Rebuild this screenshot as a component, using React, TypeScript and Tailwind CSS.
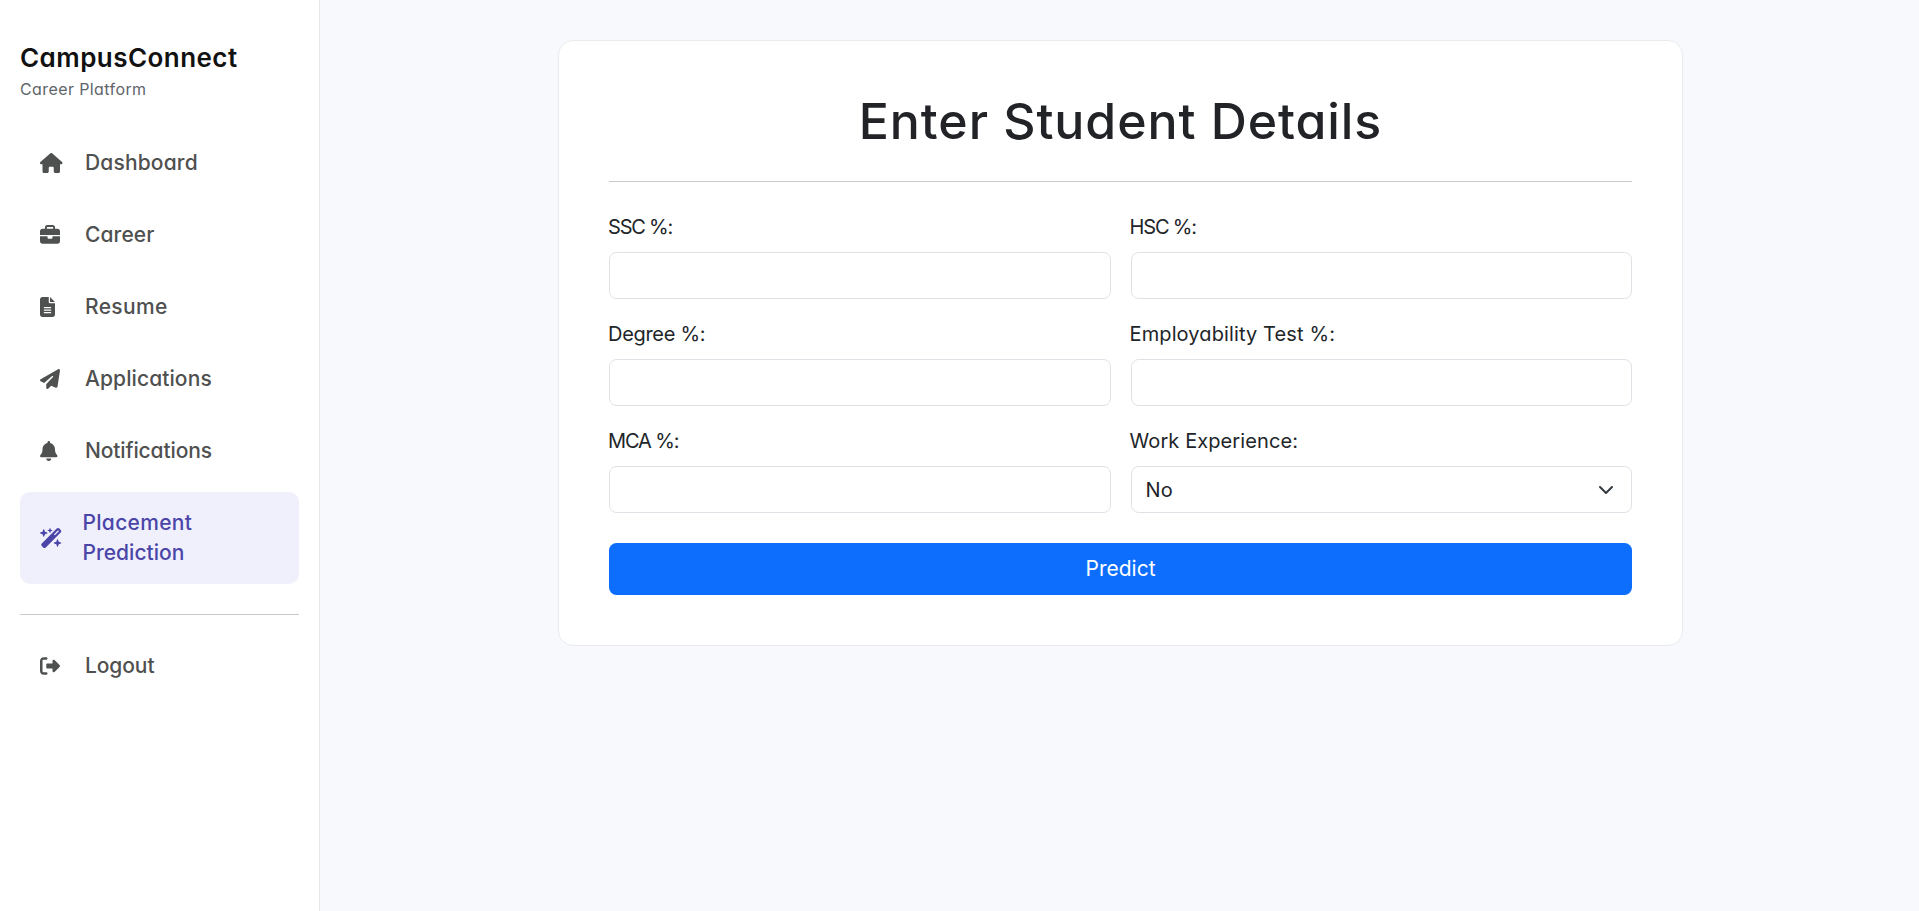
import type { ReactNode } from 'react'
import type { IconType } from 'react-icons'
import {
  FaHouse,
  FaBriefcase,
  FaFileLines,
  FaPaperPlane,
  FaBell,
  FaWandMagicSparkles,
  FaRightFromBracket,
} from 'react-icons/fa6'

type NavItem = { label: string; icon: IconType; iconWidth: string; tracking: string }

const navItems: NavItem[] = [
  { label: 'Dashboard', icon: FaHouse, iconWidth: 'w-[22.5px]', tracking: 'tracking-[0.15px]' },
  { label: 'Career', icon: FaBriefcase, iconWidth: 'w-5', tracking: 'tracking-[0.1px]' },
  { label: 'Resume', icon: FaFileLines, iconWidth: 'w-[15px]', tracking: 'tracking-[0.35px]' },
  { label: 'Applications', icon: FaPaperPlane, iconWidth: 'w-5', tracking: 'tracking-[0.1px]' },
  { label: 'Notifications', icon: FaBell, iconWidth: 'w-[17.5px]', tracking: 'tracking-[-0.12px]' },
]

const logoutItem: NavItem = {
  label: 'Logout',
  icon: FaRightFromBracket,
  iconWidth: 'w-5',
  tracking: 'tracking-[-0.1px]',
}

function NavLink({ label, icon: Icon, iconWidth, tracking }: NavItem) {
  return (
    <a href="#" className="flex items-center rounded-[10px] px-5 py-4 text-[21px] leading-[30px] font-medium text-[#4f5050]">
      <span className="mr-5 flex w-[25px] shrink-0">
        <Icon className={`h-5 ${iconWidth}`} preserveAspectRatio="none" />
      </span>
      <span className={tracking}>{label}</span>
    </a>
  )
}

function Field({ label, tracking, children }: { label: string; tracking: string; children?: ReactNode }) {
  return (
    <div>
      <label className={`mb-2.5 -ml-px block text-xl leading-[30px] whitespace-nowrap ${tracking}`}>{label}</label>
      {children ?? (
        <input type="text" className="block h-[47px] w-full rounded-[7.5px] border border-[#dee2e6] bg-white px-[15px]" />
      )}
    </div>
  )
}

export default function App() {
  return (
    <div className="flex h-[911px] overflow-hidden bg-[#f8f9fd] font-['Inter',sans-serif] text-[#212529] [font-feature-settings:'cv11','calt'_0]">
      <aside className="w-80 shrink-0 border-r border-[#e5e7eb] bg-white px-5 pt-[42px]">
        <h4 className="text-[26px] leading-[31px] font-semibold tracking-[0.45px] text-[#111111]">CampusConnect</h4>
        <p className="mt-1 text-base leading-6 tracking-[0.4px] text-[#60656a]">Career Platform</p>

        <nav className="mt-[31px] flex flex-col gap-2.5">
          {navItems.map((item) => (
            <NavLink key={item.label} {...item} />
          ))}
          <a href="#" className="flex items-center rounded-[10px] bg-[#f0f0fd] px-5 py-4 text-[21px] leading-[30px] font-medium text-[#4b45a8]">
            <span className="mr-5 flex w-[22.5px] shrink-0">
              <FaWandMagicSparkles className="h-5 w-[22.5px]" preserveAspectRatio="none" />
            </span>
            <span className="flex flex-col">
              <span className="tracking-[0.3px]">Placement</span>
              <span className="tracking-[0.02px]">Prediction</span>
            </span>
          </a>
        </nav>

        <hr className="mt-[30px] mb-5 border-t border-[#c8c9ca]" />
        <NavLink {...logoutItem} />
      </aside>

      <main className="flex-1 pt-10 pl-[238px]">
        <form className="w-[1125px] rounded-[15px] border border-[#e9ebee] bg-white p-[50px]">
          <h1 className="text-center text-[50px] leading-[60px] font-medium tracking-[0.93px] whitespace-nowrap text-[#212326]">
            Enter Student Details
          </h1>
          <hr className="my-[30px] border-t border-[#c8c9ca]" />
          <div className="grid grid-cols-2 gap-5">
            <Field label="SSC %:" tracking="tracking-[-1.2px]" />
            <Field label="HSC %:" tracking="tracking-[-1.15px]" />
            <Field label="Degree %:" tracking="tracking-[-0.3px]" />
            <Field label="Employability Test %:" tracking="tracking-[0.12px]" />
            <Field label="MCA %:" tracking="tracking-[-1.1px]" />
            <Field label="Work Experience:" tracking="tracking-[0.1px]">
              <button
                type="button"
                className="flex h-[47px] w-full items-center justify-between rounded-[7.5px] border border-[#dee2e6] bg-white pr-[17px] pl-[14px] text-xl tracking-[0.3px]"
              >
                No
                <svg className="h-4 w-4" viewBox="0 0 16 16" fill="none" stroke="#343a40" strokeWidth="2" strokeLinecap="round" strokeLinejoin="round">
                  <path d="m2 5 6 6 6-6" />
                </svg>
              </button>
            </Field>
          </div>
          <button type="button" className="mt-[30px] block h-[52px] w-full rounded-[7.5px] bg-[#0d6efd] text-[21px] leading-[30px] text-white">
            Predict
          </button>
        </form>
      </main>
    </div>
  )
}
